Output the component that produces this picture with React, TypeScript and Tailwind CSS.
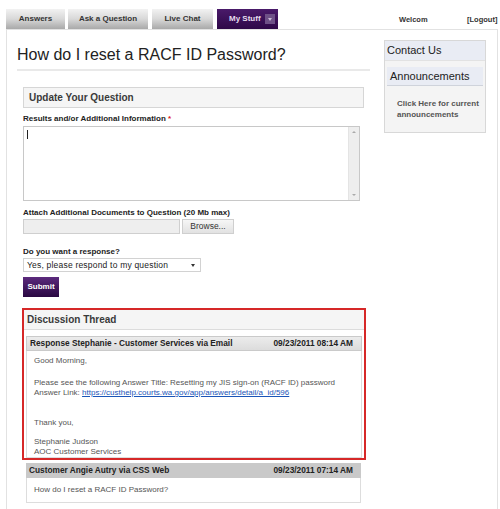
function Tab({ label, className }: { label: string; className: string }) {
  return (
    <div
      className={`flex h-[20px] items-center justify-center bg-gradient-to-b from-[#f2f2f2] via-[#d8d8d8] to-[#a9a9a9] text-[8px] font-bold text-[#333] ${className}`}
    >
      {label}
    </div>
  );
}

export default function App() {
  return (
    <div className="h-[509px] w-[500px] overflow-hidden bg-white font-['Liberation_Sans',Arial,sans-serif] text-[#333]">
      {/* top navigation */}
      <div className="flex h-[29px] pl-[6px]">
        <div className="mt-[9px] flex">
          <Tab label="Answers" className="w-[59px]" />
          <Tab label="Ask a Question" className="ml-[3px] w-[80px]" />
          <Tab label="Live Chat" className="ml-[4px] w-[61px]" />
          <div className="ml-[4px] flex h-[20px] w-[61px] items-center bg-gradient-to-b from-[#4a1a6a] to-[#2e0848] pl-[12px]">
            <span className="text-[8px] font-bold text-[#e6dcef]">My Stuff</span>
            <span className="ml-[4px] flex h-[10px] w-[10px] items-center justify-center bg-[#6e5087]">
              <span className="h-0 w-0 border-x-[2px] border-t-[3px] border-x-transparent border-t-[#c9b9d6]" />
            </span>
          </div>
        </div>
        <div className="ml-[121px] mt-[15px] flex text-[7.5px] font-bold leading-[9px] text-[#333]">
          <span className="w-[68px]">Welcom</span>
          <span>[Logout]</span>
        </div>
      </div>

      {/* main panel */}
      <div className="ml-[6px] flex h-[480px] w-[492px] border-x border-t border-[#e2e2e2]">
        {/* left column */}
        <div className="ml-[10px] w-[353px]">
          <h1 className="border-b-2 border-[#e9e9e9] pb-[4px] pt-[15px] text-[16px] leading-[20px] text-[#222]">
            How do I reset a RACF ID Password?
          </h1>

          <div className="mt-[16px] px-[6px]">
            <div className="flex h-[21px] items-center border border-[#d6d6d6] bg-[#f5f5f5] pl-[5px] text-[10px] font-bold text-[#3a3a3a]">
              Update Your Question
            </div>

            <div className="mt-[6px] text-[8px] font-bold leading-[10px] text-[#222]">
              Results and/or Additional Information <span className="text-[#d22]">*</span>
            </div>
            <div className="mt-[2px] flex h-[75px] w-[337px] border border-[#c8c8c8] bg-white">
              <div className="flex-1 pl-[3px] pt-[3px]">
                <div className="h-[9px] w-px bg-[#222]" />
              </div>
              <div className="flex w-[11px] flex-col items-center justify-between border-l border-[#e4e4e4] bg-[#eeeeee] py-[4px]">
                <span className="h-0 w-0 border-x-[2px] border-b-[2px] border-x-transparent border-b-[#aaa]" />
                <span className="h-0 w-0 border-x-[2px] border-t-[2px] border-x-transparent border-t-[#aaa]" />
              </div>
            </div>

            <div className="mt-[7px] text-[8px] font-bold leading-[10px] text-[#222]">
              Attach Additional Documents to Question (20 Mb max)
            </div>
            <div className="mt-[1px] flex h-[15px]">
              <div className="w-[157px] border border-[#cfcfcf] bg-[#eeeeee]" />
              <div className="ml-[2px] flex w-[52px] items-center justify-center border border-[#cfcfcf] bg-gradient-to-b from-[#f6f6f6] to-[#e2e2e2] text-[8.5px] text-[#333]">
                Browse...
              </div>
            </div>

            <div className="mt-[13px] text-[8px] font-bold leading-[10px] text-[#222]">
              Do you want a response?
            </div>
            <div className="mt-[1px] flex h-[14px] w-[178px] items-center border border-[#d2d2d2] bg-white pl-[3px] pr-[5px]">
              <span className="flex-1 text-[8.5px] tracking-[0.2px] text-[#222]">
                Yes, please respond to my question
              </span>
              <span className="h-0 w-0 border-x-[2.5px] border-t-[3px] border-x-transparent border-t-[#333]" />
            </div>

            <div className="mt-[5px] flex h-[20px] w-[36px] items-center justify-center bg-gradient-to-b from-[#5c2a7e] to-[#2a0842] text-[8px] font-bold text-white">
              Submit
            </div>

            {/* discussion thread */}
            <div className="ml-[-1px] mt-[11px] w-[344px] border-2 border-[#d62828]">
              <div className="flex h-[20px] items-center border-b border-[#dcdcdc] bg-[#f5f5f5] pl-[3px] text-[10px] font-bold text-[#3a3a3a]">
                Discussion Thread
              </div>
              <div className="mx-[2px] mt-[6px]">
                <div className="flex h-[15px] items-center justify-between border border-[#cacaca] bg-gradient-to-b from-[#ececec] to-[#dcdcdc] pl-[3px] pr-[8px] text-[8.3px] font-bold text-[#222]">
                  <span>Response Stephanie - Customer Services via Email</span>
                  <span>09/23/2011 08:14 AM</span>
                </div>
                <div className="border-x border-b border-[#dddddd] pb-[1px] pl-[7px] pt-[5px] text-[8px] leading-[10px] text-[#555]">
                  <div>Good Morning,</div>
                  <div className="mt-[12px]">
                    Please see the following Answer Title: Resetting my JIS sign-on (RACF ID) password
                  </div>
                  <div>
                    Answer Link:{" "}
                    <span className="text-[#1a55b8] underline">
                      https://custhelp.courts.wa.gov/app/answers/detail/a_id/596
                    </span>
                  </div>
                  <div className="mt-[20px]">Thank you,</div>
                  <div className="mt-[9px]">Stephanie Judson</div>
                  <div className="leading-[9px]">AOC Customer Services</div>
                </div>
              </div>
            </div>

            <div className="ml-[3px] mt-[3px] w-[335px]">
              <div className="flex h-[15px] items-center justify-between bg-[#c9c9c9] pl-[3px] pr-[8px] text-[8.3px] font-bold text-[#222]">
                <span>Customer Angie Autry via CSS Web</span>
                <span>09/23/2011 07:14 AM</span>
              </div>
              <div className="h-[25px] border-x border-b border-[#dddddd] pl-[7px] pt-[7px] text-[8px] leading-[10px] text-[#555]">
                How do I reset a RACF ID Password?
              </div>
            </div>
          </div>
        </div>

        {/* sidebar */}
        <div className="ml-[14px] mt-[10px] h-[93px] w-[102px] border border-[#d8d8d8] bg-[#f4f4f4]">
          <div className="flex h-[20px] items-center border-b border-[#e2e2e2] bg-[#e9ecf4] pl-[2px] text-[11px] text-[#222]">
            Contact Us
          </div>
          <div className="mx-[2px] mt-[6px] flex h-[19px] items-center border-b border-[#cfd3db] bg-[#e9ecf4] pl-[3px] text-[11px] text-[#222]">
            Announcements
          </div>
          <div className="mt-[12px] pl-[12px] text-[8px] font-bold leading-[11px] text-[#555]">
            Click Here for current
            <br />
            announcements
          </div>
        </div>
      </div>
    </div>
  );
}
